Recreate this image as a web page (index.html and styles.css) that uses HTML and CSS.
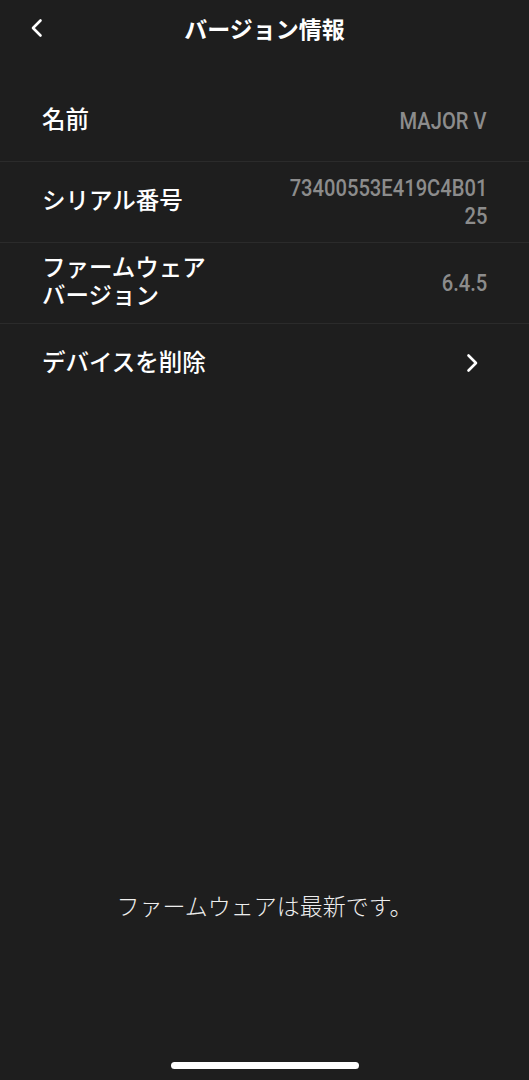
FILE: index.html
```html
<!DOCTYPE html>
<html lang="ja">
<head>
    <meta charset="UTF-8">
    <title>バージョン情報</title>
    <link rel="stylesheet" href="styles.css">
</head>
<body>
    <div class="screen">
        <header class="nav-bar">
            <button class="back-btn" aria-label="戻る">
                <svg width="14" height="20" viewBox="0 0 14 20">
                    <path d="M10.5 2.5 L3 10 L10.5 17.5" fill="none" stroke="#fff" stroke-width="2.6" stroke-linecap="round" stroke-linejoin="round"/>
                </svg>
            </button>
            <h1>バージョン情報</h1>
            <span></span>
        </header>

        <div class="info-list">
            <div class="row">
                <div class="label">名前</div>
                <div class="value">MAJOR V</div>
            </div>
            <div class="row">
                <div class="label">シリアル番号</div>
                <div class="value">73400553E419C4B01<br>25</div>
            </div>
            <div class="row">
                <div class="label">ファームウェア<br>バージョン</div>
                <div class="value">6.4.5</div>
            </div>
            <div class="row row-link">
                <div class="label">デバイスを削除</div>
                <svg class="chevron" width="14" height="20" viewBox="0 0 14 20">
                    <path d="M3.5 2.5 L11 10 L3.5 17.5" fill="none" stroke="#fff" stroke-width="2.6" stroke-linecap="round" stroke-linejoin="round"/>
                </svg>
            </div>
        </div>

        <div class="status">ファームウェアは最新です。</div>
        <div class="home-indicator"></div>
    </div>
</body>
</html>
```

FILE: styles.css
```css
body {
    margin: 0;
    background-color: #1e1e1e;
    font-family: "Noto Sans CJK JP", "Noto Sans", sans-serif;
    color: #f2f2f2;
}

.screen {
    height: 1080px;
    display: flex;
    flex-direction: column;
}

.nav-bar {
    height: 56px;
    display: grid;
    grid-template-columns: 1fr auto 1fr;
    align-items: center;
}

.back-btn {
    justify-self: start;
    margin-left: 30px;
    padding: 0;
    background: none;
    border: none;
    display: flex;
    cursor: pointer;
}

.nav-bar h1 {
    margin: 0;
    font-size: 23px;
    line-height: 30px;
    font-weight: 700;
    color: #fff;
}

.info-list {
    margin-top: 25px;
    flex: 1;
}

.row {
    min-height: 80px;
    display: flex;
    align-items: center;
    justify-content: space-between;
    padding: 0 42px;
    border-bottom: 1px solid #2b2b2b;
}

.row:last-child {
    border-bottom: none;
}

.label {
    font-size: 23.5px;
    line-height: 28px;
    font-weight: 500;
    color: #fff;
    margin-bottom: 7px;
}

.value {
    font-family: "Roboto", sans-serif;
    font-size: 24px;
    line-height: 28px;
    font-weight: 500;
    color: #8c8c8c;
    text-align: right;
    transform: scaleX(0.84);
    transform-origin: right center;
}

.row-link .chevron {
    margin-right: 8px;
    margin-bottom: 2px;
}

.status {
    text-align: center;
    font-size: 23px;
    font-weight: 300;
    line-height: 32px;
    color: #eee;
}

.home-indicator {
    width: 188px;
    height: 7px;
    border-radius: 4px;
    background: #fff;
    margin: 141px auto 11px;
}
```
